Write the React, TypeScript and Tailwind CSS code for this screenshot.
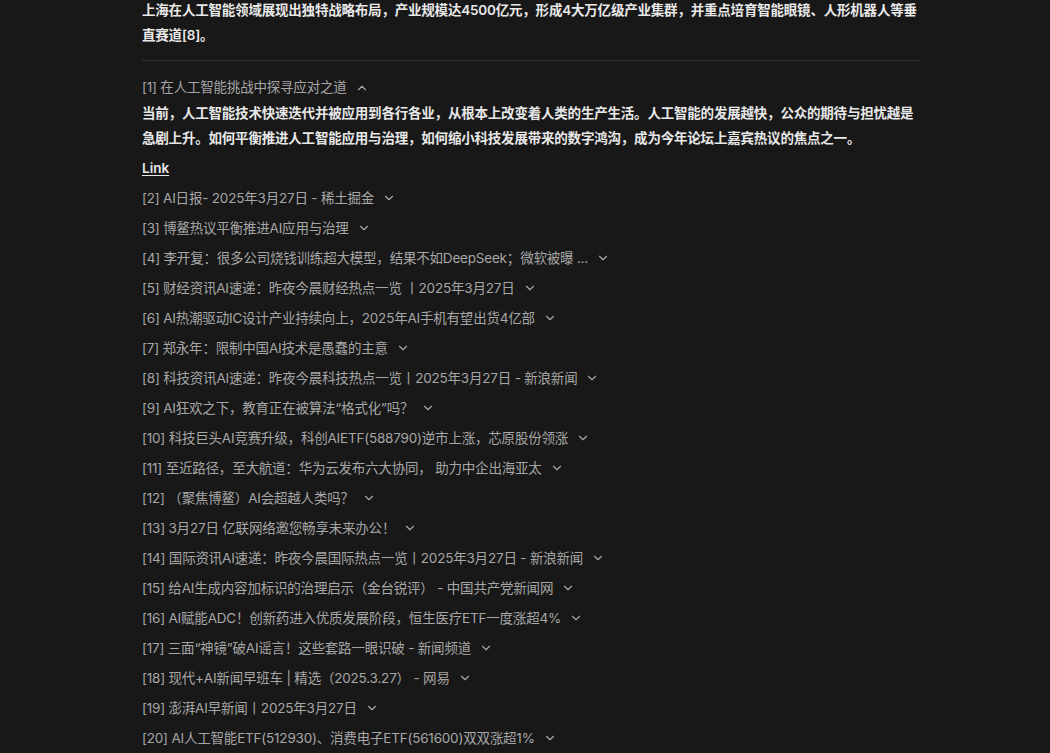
import React from "react";
import { ChevronDown, ChevronUp } from "lucide-react";

const items: string[] = [
  "[2] AI日报- 2025年3月27日 - 稀土掘金",
  "[3] 博鳌热议平衡推进AI应用与治理",
  "[4] 李开复：很多公司烧钱训练超大模型，结果不如DeepSeek；微软被曝 ...",
  "[5] 财经资讯AI速递：昨夜今晨财经热点一览 丨2025年3月27日",
  "[6] AI热潮驱动IC设计产业持续向上，2025年AI手机有望出货4亿部",
  "[7] 郑永年：限制中国AI技术是愚蠢的主意",
  "[8] 科技资讯AI速递：昨夜今晨科技热点一览丨2025年3月27日 - 新浪新闻",
  "[9] AI狂欢之下，教育正在被算法“格式化”吗？",
  "[10] 科技巨头AI竞赛升级，科创AIETF(588790)逆市上涨，芯原股份领涨",
  "[11] 至近路径，至大航道：华为云发布六大协同， 助力中企出海亚太",
  "[12] （聚焦博鳌）AI会超越人类吗？",
  "[13] 3月27日 亿联网络邀您畅享未来办公！",
  "[14] 国际资讯AI速递：昨夜今晨国际热点一览丨2025年3月27日 - 新浪新闻",
  "[15] 给AI生成内容加标识的治理启示（金台锐评） - 中国共产党新闻网",
  "[16] AI赋能ADC！创新药进入优质发展阶段，恒生医疗ETF一度涨超4%",
  "[17] 三面“神镜”破AI谣言！这些套路一眼识破 - 新闻频道",
  "[18] 现代+AI新闻早班车 | 精选（2025.3.27） - 网易",
  "[19] 澎湃AI早新闻丨2025年3月27日",
  "[20] AI人工智能ETF(512930)、消费电子ETF(561600)双双涨超1%",
];

export default function App() {
  return (
    <div
      className="min-h-[753px] w-full overflow-hidden bg-[#181818]"
      style={{ fontFamily: 'Inter, "Noto Sans CJK SC", sans-serif' }}
    >
      <div className="ml-[142px] w-[778px] -mt-[2px]">
        <p className="text-[13.5px] font-semibold leading-[25px] tracking-[-0.2px] text-[#e8e8e8]">
          上海在人工智能领域展现出独特战略布局，产业规模达4500亿元，形成4大万亿级产业集群，并重点培育智能眼镜、人形机器人等垂直赛道[8]。
        </p>
        <div className="mt-[12px] h-px w-full bg-[#333333]" />
        <div className="mt-[13px] flex h-[27px] items-center gap-[8px] text-[13.5px] tracking-[-0.2px] text-[#a6a6a6]">
          <span>[1] 在人工智能挑战中探寻应对之道</span>
          <ChevronUp size={14} strokeWidth={2} className="text-[#a6a6a6]" />
        </div>
        <p className="text-[13.5px] font-semibold leading-[25px] tracking-[-0.2px] text-[#e8e8e8]">
          当前，人工智能技术快速迭代并被应用到各行各业，从根本上改变着人类的生产生活。人工智能的发展越快，公众的期待与担忧越是急剧上升。如何平衡推进人工智能应用与治理，如何缩小科技发展带来的数字鸿沟，成为今年论坛上嘉宾热议的焦点之一。
        </p>
        <div className="mt-[5px] h-[25px] text-[13.5px] font-semibold leading-[25px] text-[#e8e8e8]">
          <a className="underline underline-offset-2">Link</a>
        </div>
        <div className="mt-[2px] flex flex-col">
          {items.map((t) => (
            <div
              key={t}
              className="flex h-[30px] items-center gap-[8px] text-[13.5px] tracking-[-0.2px] text-[#a6a6a6]"
            >
              <span className="whitespace-nowrap">{t}</span>
              <ChevronDown size={14} strokeWidth={2} className="text-[#a6a6a6]" />
            </div>
          ))}
        </div>
      </div>
    </div>
  );
}
